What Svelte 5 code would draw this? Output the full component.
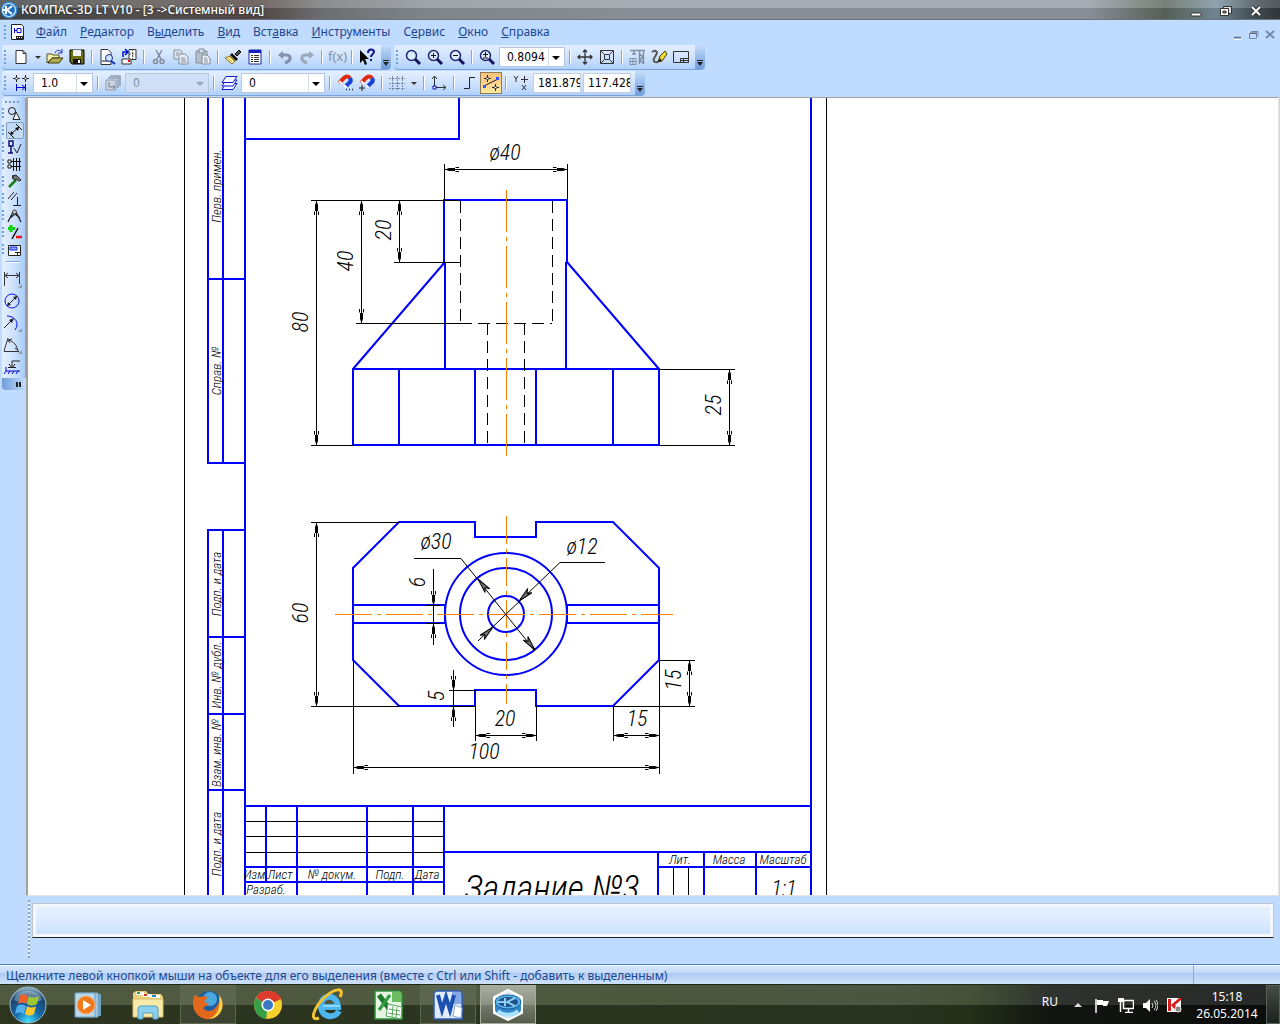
<script>
  const menu = [
    ['', 'Ф', 'айл'],
    ['', 'Р', 'едактор'],
    ['В', 'ы', 'делить'],
    ['', 'В', 'ид'],
    ['Вст', 'а', 'вка'],
    ['', 'И', 'нструменты'],
    ['С', 'е', 'рвис'],
    ['', 'О', 'кно'],
    ['', 'С', 'правка']
  ];

  const lens = '<path d="M10 10l5 5" stroke="#151560" stroke-width="3"/><circle cx="6.500" cy="6.500" r="5" fill="#dcecff" stroke="#22226a" stroke-width="1.500"/>';
  const magnet = '<path d="M2 8L7 3q3-3 6 0" fill="none" stroke="#e02a10" stroke-width="4"/><path d="M13 3q2 3-1 5l-4 4" fill="none" stroke="#1644d8" stroke-width="4"/><path d="M2 6l3 3M7 10l3 3" stroke="#fff" stroke-width="2"/>';

  const icons = {
    create: '<path d="M3 1.500h7l3 3v10H3z" fill="#fff" stroke="#333"/><path d="M10 1.500v3h3" fill="none" stroke="#333"/>',
    open: '<path d="M0 14V5h5l1 1h6v3H5z" fill="#f4efb0" stroke="#55501a"/><path d="M1 14l4-5h11l-4 5z" fill="#b5ad55" stroke="#3c3800"/><path d="M8 4c2-4 4-3 7-1m0-3v4h-4" fill="none" stroke="#1a2fd0"/>',
    save: '<path d="M1 1h14v14H3l-2-2z" fill="#6d7010" stroke="#000"/><path d="M4 1h8v6H4z" fill="#f0f0f0"/><path d="M4 10h8v5H4z" fill="#111"/><path d="M9 11h2v3H9z" fill="#fff"/>',
    preview: '<path d="M2 .500h7l3 3v12H2z" fill="#fff" stroke="#333"/><path d="M3 11h6v2H3z" fill="#888"/><circle cx="10" cy="9" r="3.500" fill="#cbe4ff" stroke="#1c2c90"/><path d="M12 12l4 3" stroke="#1030c0" stroke-width="2"/>',
    manager: '<path d="M8 .500h7v10H8z" fill="#fff" stroke="#333"/><path d="M11.500 0v10M8 5h7" stroke="#555" stroke-dasharray="2 1"/><path d="M1 10h9v5H1z" fill="#f7f7f7" stroke="#333"/><path d="M7 12h2" stroke="#e00" stroke-width="2"/><path d="M2 8V3h4M4 0l3 3-3 3" fill="none" stroke="#0010d0" stroke-width="1.500"/>',
    cut: '<path d="M5 1l5 9M11 1l-5 9" stroke="#808b9a" stroke-width="1.500"/><circle cx="4.500" cy="12.500" r="2" fill="none" stroke="#808b9a" stroke-width="1.500"/><circle cx="11" cy="12.500" r="2" fill="none" stroke="#808b9a" stroke-width="1.500"/>',
    copy: '<path d="M1 1h6l2 2v7H1z" fill="#dfe6ee" stroke="#8391a3"/><path d="M6 5h6l3 3v7H6z" fill="#e8edf4" stroke="#8391a3"/><path d="M3 4h3M3 6h2M8 9h4M8 11h5M8 13h5" stroke="#8391a3"/>',
    paste: '<path d="M1 2h11v12H1z" fill="#b6bfca" stroke="#7f8c9c"/><path d="M4 0h5v4H4z" fill="#d7dde5" stroke="#7f8c9c"/><path d="M7 6h5l3 3v6H7z" fill="#eef1f5" stroke="#7f8c9c"/><path d="M9 9h3M9 11h4M9 13h4" stroke="#8391a3"/>',
    brush: '<path d="M10 5l4-4 2 2-4 4z" fill="#555" stroke="#000"/><path d="M7 4l6 6-2 2-6-6z" fill="#111"/><path d="M5 7l5 5-3 3-7-6z" fill="#fff6b0" stroke="#8a6a10"/><path d="M3 9l4 4M5 8l4 4" stroke="#d8a820"/>',
    props: '<path d="M2 1h12v14H2z" fill="#fff" stroke="#1a2a9a"/><path d="M2 1h12v3H2z" fill="#1420c0"/><path d="M4 6.500h2M4 8.500h2M4 10.500h2M4 12.500h2M7 6.500h5M7 8.500h5M7 10.500h5M7 12.500h5" stroke="#333"/>',
    undo: '<path d="M6 2v8L1 6z" fill="#8391a8"/><path d="M5 6h5c5 1 4 6-2 8" fill="none" stroke="#8391a8" stroke-width="3"/>',
    redo: '<path d="M10 2v8l5-4z" fill="#9aa8bb"/><path d="M11 6H6c-5 1-4 6 2 8" fill="none" stroke="#9aa8bb" stroke-width="3"/>',
    fx: '<text x="-1" y="12" font-size="13" fill="#8592a3">f(x)</text>',
    help: '<path d="M1 1v13l3-3 2 5 2-1-2-5h4z" fill="#000"/><path d="M9 4c0-5 6-4 6-1 0 2-3 2-3 5m0 2v2" fill="none" stroke="#14148a" stroke-width="2"/>',
    zoom: lens,
    zoomIn: lens + '<path d="M4 6.500h5M6.500 4v5" stroke="#111"/>',
    zoomOut: lens + '<path d="M4 6.500h5" stroke="#111"/>',
    zoomBoth: lens + '<path d="M4 5.500h5M6.500 3v5M4 9h5" stroke="#111"/>',
    pan: '<path d="M8 1v14M1 8h14M6 3l2-2 2 2M6 13l2 2 2-2M3 6L1 8l2 2M13 6l2 2-2 2" fill="none" stroke="#333" stroke-width="1.300"/>',
    fit: '<path d="M1.500 1.500h13v13h-13zM5.500 5.500h5v5h-5zM2 2l3 3M14 2l-3 3M2 14l3-3M14 14l-3-3" fill="none" stroke="#333"/>',
    rebuild: '<path d="M1 1.500h15M5 2v3M3 5h4M10.500 2v13M14.500 2v13M11 5l3 3-3 3 3 3" fill="none" stroke="#8090a4" stroke-width="1.500"/><path d="M1 9.500h6v6H1zM4 9v6M1 12.500h6" fill="none" stroke="#8090a4"/>',
    redraw: '<path d="M1 3c4-3 6 0 4 3s-5 8 2 7" fill="none" stroke="#555" stroke-width="2"/><path d="M7 13l2-6 5-5 2 3-5 7z" fill="#f0dc30" stroke="#4a4000"/><path d="M7 13l2-4 2 3z" fill="#222"/>',
    sheet: '<path d="M.500 2.500h15v11H.500z" fill="none" stroke="#333"/><path d="M7.500 9.500h8v4h-8zM10.500 9v4M7 11.500h8" fill="none" stroke="#333"/>',
    step: '<path d="M3.500 0v7M0 3.500h7M12.500 0v7M9 3.500h7" stroke="#222"/><path d="M3.500 2l1.500 1.500L3.500 5 2 3.500zM12.500 2L14 3.500 12.500 5 11 3.500z" fill="#fff" stroke="#222"/><path d="M3.500 9v7M12.500 9v7M4 12.500h8M9 10l3 2.500-3 2.500" fill="none" stroke="#0000e0"/>',
    states: '<path d="M5 1h10v10M3 3h10v10" fill="none" stroke="#8d9bad" stroke-width="1.500"/><path d="M1 5h10v10H1z" fill="#cbd6e3" stroke="#8d9bad"/><path d="M4 7v5h6M8 10l2 2-2 2" fill="none" stroke="#6f7e91"/>',
    layers: '<path d="M5 8.500h11l-4 6H1z" fill="#f2f8ff" stroke="#1818c8"/><path d="M5 5h11l-4 6H1z" fill="#f2f8ff" stroke="#1818c8"/><path d="M5 1.500h11l-4 6H1z" fill="#f2f8ff" stroke="#1818c8"/>',
    snap: magnet + '<path d="M9 14.500h1M12 14.500h1M15 14.500h1" stroke="#222" stroke-width="1.500"/>',
    snapOne: magnet + '<path d="M3 10v6M0 13h6" stroke="#222"/>',
    grid: '<path d="M0 3.500h16M0 8.500h16M0 13.500h16M3.500 1v15M8.500 1v15M13.500 1v15" stroke="#77869a" stroke-dasharray="2 1"/>',
    axes: '<path d="M3.500 12V2M1 4l2.500-3L6 4M4 12.500h11M12 10l3 2.500-3 2.500" fill="none" stroke="#333"/><path d="M2 11h3v3H2z" fill="#fff" stroke="#0000e0"/>',
    ortho: '<path d="M3 13.500h5.500V2.500H14" fill="none" stroke="#222"/>',
    round: '<path d="M1 11L15 4" stroke="#222"/><path d="M4.500 0v7M1 3.500h7M12.500 9v7M9 12.500h7" stroke="#222"/><path d="M4.500 2L6 3.500 4.500 5 3 3.500zM12.500 11l1.500 1.500-1.500 1.500-1.500-1.500z" fill="#fff" stroke="#222"/><path d="M0 10h3v3H0zM13 2h3v3h-3z" fill="#3355ff"/>',
    coords: '<path d="M1 1l2 3 2-3M3 4v3M9 10l4 5M13 10l-4 5M11.500 1v7M8 4.500h7" stroke="#333" fill="none"/>',

    geometry: '<circle cx="5" cy="5" r="3.500" fill="none" stroke="#222"/><path d="M9 6l4 7.500H6z" fill="#eef5ff" stroke="#222"/>',
    sizes: '<path d="M3 12l9-8M1 9l6 6M9 1l6 6" stroke="#111"/><path d="M3 12l1-4 3 3zM12 4L8 5l3 3z" fill="#111"/>',
    marks: '<path d="M2 1h4v5H2z" fill="none" stroke="#10107a" stroke-width="1.500"/><path d="M4 6v7M1 13h5" stroke="#10107a" stroke-width="1.500"/><path d="M7 8l3 5 4-9" fill="none" stroke="#222"/>',
    edit: '<path d="M3 4.500h11M3 9.500h11M6.500 1v13M9.500 1v13M12.500 1v13" stroke="#111"/><path d="M1 3h3v3H1zM1 8h3v3H1z" fill="#fff" stroke="#111"/>',
    build: '<path d="M2 13l7-7" stroke="#158015" stroke-width="2.500"/><path d="M5 2l4-1 5 5-2 1-3-2-1 1-3-2 2-1z" fill="#777" stroke="#222"/>',
    params: '<path d="M1 8l6-7M4 9l6-7M10.500 6v8M6 14.500h8" stroke="#222"/>',
    measure: '<path d="M6 4L1 14M9 4l5 10M3 10l5-4 5 4" fill="none" stroke="#222" stroke-width="1.300"/><circle cx="7.500" cy="4" r="2" fill="#ccc" stroke="#444"/>',
    select: '<path d="M4 0v7M1 3.500h7" stroke="#10d010" stroke-width="3"/><path d="M11 3L5 14" stroke="#111" stroke-width="1.500"/><path d="M9 12h6" stroke="#f01010" stroke-width="2.500"/>',
    spec: '<path d="M1.500 3.500h12v10h-12z" fill="#fff" stroke="#222"/><path d="M3 5h7v3H3z" fill="#8fa0ff" stroke="#1030d0"/><path d="M8 10.500h6M10.500 10v4" stroke="#222" fill="none"/>',

    linear: '<path d="M1.500 2v14M16.500 2v12M2 5.500h14M5 3L2 5.500 5 8M13 3l3 2.500L13 8" fill="none" stroke="#333"/>',
    diameter: '<circle cx="9" cy="9" r="7" fill="none" stroke="#1010d0"/><path d="M4 14L14 4" stroke="#222"/><path d="M4 14l1-4 3 3zM14 4l-4 1 3 3z" fill="#222"/>',
    radius: '<path d="M4 2c8 0 13 7 8 14" fill="none" stroke="#1010d0"/><path d="M1 14l9-9" stroke="#222"/><path d="M11 4L6 6l3 3z" fill="#222"/>',
    angle: '<path d="M1 15.500h15M1 15L5 2M5 4c6 1 9 6 10 11M5 4l4-1M5 4l2 3M15 14l-3-2" fill="none" stroke="#333"/>',
    height: '<path d="M9 9V3h8M6 6l3 4 3-4M5 9.500h8" fill="none" stroke="#222"/><path d="M3 9v4h14M3 13l-2 3M7 13l-2 3M11 13l-2 3M15 13l-2 3" fill="none" stroke="#0000d8"/>'
  };

  const standard = ['create', 'v', 'open', 'save', '|', 'preview', 'manager', '|', 'cut', 'copy', 'paste', '|', 'brush', 'props', '|', 'undo', 'redo', '|', 'fx', '|', 'help'];
  const panels = ['geometry', 'sizes', 'marks', 'edit', 'build', 'params', 'measure', 'select', 'spec'];
  const commands = ['linear', 'diameter', 'radius', 'angle', 'height'];

  let scale = '0.8094';
  let step = '1.0';
  let layer = '0';
  let x = '181.879';
  let y = '117.428';

  // x, y of the text middle, string, rotated
  const sizes = [
    [505, 160, 'ø40'],
    [308, 322, '80', true],
    [353, 261, '40', true],
    [391, 230, '20', true],
    [721, 405, '25', true],
    [308, 613, '60', true],
    [425, 582, '6', true],
    [444, 696, '5', true],
    [681, 680, '15', true],
    [436, 549, 'ø30'],
    [582, 554, 'ø12'],
    [505, 726, '20'],
    [637, 726, '15'],
    [484, 759, '100'],
    [784, 896, '1:1']
  ];

  const stamps = [
    [221, 186, 'Перв. примен.', true],
    [221, 371, 'Справ. №', true],
    [221, 584, 'Подп. и дата', true],
    [221, 675, 'Инв. № дубл.', true],
    [221, 753, 'Взам. инв. №', true],
    [221, 844, 'Подп. и дата', true],
    [256, 879, 'Изм.'],
    [280, 879, 'Лист'],
    [332, 879, '№ докум.'],
    [390, 879, 'Подп.'],
    [427, 879, 'Дата'],
    [266, 894, 'Разраб.'],
    [680, 864, 'Лит.'],
    [729, 864, 'Масса'],
    [783, 864, 'Масштаб']
  ];

  // tip x, tip y, direction of the tail in degrees
  const arrows = [
    [445, 169.5, 0], [567, 169.5, 180],
    [316.5, 201, 90], [316.5, 445, -90],
    [361.5, 201, 90], [361.5, 323, -90],
    [399.5, 201, 90], [399.5, 262, -90],
    [729.5, 370, 90], [729.5, 445, -90],
    [316.5, 523, 90], [316.5, 706, -90],
    [433.5, 605, -90], [433.5, 624, 90],
    [453.5, 690, -90], [453.5, 707, 90],
    [689.5, 661, 90], [689.5, 706, -90],
    [476, 735.5, 0], [536, 735.5, 180],
    [614, 735.5, 0], [659, 735.5, 180],
    [354, 767.5, 0], [659, 767.5, 180]
  ];
  const slanted = [[478, 579, 51], [535, 650, 231], [519, 601, -44], [493, 627, 136]];
</script>

{#snippet icon(name, size = 16)}
  <svg class="icon" width={size} height={size} viewBox="0 0 {size} {size}" aria-hidden="true">{@html icons[name]}</svg>
{/snippet}

{#snippet tools(list)}
  {#each list as item}
    {#if item === '|'}
      <i class="sep"></i>
    {:else if item === 'v'}
      <button class="tool drop" aria-label="create list"><i class="tri"></i></button>
    {:else}
      <button class="tool" class:active={item === 'round'} aria-label={item}>{@render icon(item)}</button>
    {/if}
  {/each}
{/snippet}

<div class="window">
  <header class="title">
    <svg class="logo" width="18" height="18" viewBox="0 0 18 18" aria-hidden="true">
      <circle cx="9" cy="9" r="8.500" fill="#2e86d6" />
      <circle cx="9" cy="9" r="6.500" fill="#1b6fc2" stroke="#d8efff" stroke-width="1.200" />
      <path d="M3 9h3M6 5v8M12 5L7 9l5 4" stroke="#fff" stroke-width="2" fill="none" />
    </svg>
    <h1>КОМПАС-3D LT V10 - [3 -&gt;Системный вид]</h1>
    <div class="controls">
      <button aria-label="minimize"><svg width="12" height="12"><path d="M1 8h10v3H1z" fill="#fff" stroke="#333" /></svg></button>
      <button aria-label="restore"><svg width="12" height="12"><path d="M3.500 1.500h8v7h-8z" fill="#ddd" stroke="#333" /><path d="M.500 3.500h8v7h-8z" fill="#fff" stroke="#333" /><path d="M3 6h3v2H3z" fill="#888" stroke="#333" /></svg></button>
      <button aria-label="close"><svg width="12" height="12"><path d="M2 2l8 8M10 2l-8 8" stroke="#333" stroke-width="4" /><path d="M2 2l8 8M10 2l-8 8" stroke="#fff" stroke-width="2" /></svg></button>
    </div>
  </header>

  <nav class="menu">
    <i class="grip"></i>
    <svg class="doc" width="16" height="16" viewBox="0 0 16 16" aria-hidden="true">
      <path d="M1.500.500h10l2 2v13h-12z" fill="#fff" stroke="#222" />
      <path d="M4.500 4v5M5 6.500h2M7 4.500h4v4H7z" fill="none" stroke="#0000e0" />
      <path d="M6 12h7v3H6z" fill="#222" /><path d="M7 13.500h1M9 13.500h1M11 13.500h1" stroke="#fff" />
    </svg>
    {#each menu as [before, key, after]}
      <button>{before}<u>{key}</u>{after}</button>
    {/each}
    <div class="child">
      <button aria-label="minimize document"><svg width="10" height="10"><path d="M1 7.500h7" stroke="#5b6f8c" stroke-width="1.500" /><path d="M1 9.500h7" stroke="#fff" /></svg></button>
      <button aria-label="restore document"><svg width="10" height="10"><path d="M2 1.500h7v5M.500 3.500h7v5h-7z" stroke="#6f86ae" fill="none" /><path d="M1 3h7" stroke="#555" /></svg></button>
      <button aria-label="close document"><svg width="10" height="10"><path d="M1 1l8 7M9 1L1 8" stroke="#7086ae" stroke-width="2" /></svg></button>
    </div>
  </nav>

  <div class="row">
    <div class="bar">
      <i class="grip"></i>
      {@render tools(standard)}
      <i class="cap"></i>
    </div>
    <div class="bar">
      <i class="grip"></i>
      {@render tools(['zoom', 'zoomIn', 'zoomOut', '|', 'zoomBoth'])}
      <div class="combo scale">
        <select aria-label="Масштаб" bind:value={scale}><option>0.8094</option></select>
        <i class="tri"></i>
      </div>
      {@render tools(['|', 'pan', 'fit', '|', 'rebuild', 'redraw', 'sheet'])}
      <i class="cap"></i>
    </div>
  </div>

  <div class="row">
    <div class="bar">
      <i class="grip"></i>
      {@render tools(['step'])}
      <div class="combo step">
        <select aria-label="Шаг" bind:value={step}><option>1.0</option></select>
        <i class="tri"></i>
      </div>
      {@render tools(['|', 'states'])}
      <div class="combo off">
        <select aria-label="Вид" disabled><option>0</option></select>
        <i class="tri"></i>
      </div>
      {@render tools(['|', 'layers'])}
      <div class="combo">
        <select aria-label="Слой" bind:value={layer}><option>0</option></select>
        <i class="tri"></i>
      </div>
      {@render tools(['|', 'snap', 'snapOne', '|', 'grid', 'v', '|', 'axes', '|', 'ortho', 'round', '|', 'coords'])}
      <input class="coord" aria-label="X" bind:value={x} />
      <input class="coord" aria-label="Y" bind:value={y} />
      <i class="cap"></i>
    </div>
  </div>

  <main>
    <aside>
      <div class="side">
        <i class="grip flat"></i>
        {#each panels as name}
          <div class="panel">
            <i class="grip small"></i>
            <button class:pressed={name === 'sizes'} aria-label={name}>{@render icon(name)}</button>
          </div>
        {/each}
        <i class="line"></i>
        {#each commands as name}
          <button class="command" class:corner={name !== 'diameter' && name !== 'height'} aria-label={name}>{@render icon(name, 18)}</button>
        {/each}
        <i class="more"></i>
      </div>
    </aside>

    <div class="canvas">
      <svg width="100%" height="100%">
        <g transform="translate(-28 -98)" fill="none">
          <!-- sheet edge and frame -->
          <path class="thin" d="M184.500 90v820M826.500 90v820" />
          <path class="main" d="M245 90V910M811 90V910M245 139H460M459 90V139" />
          <path class="main" d="M208 90V463H245M223 90V463M208 279H245" />
          <path class="main" d="M208 910V530H245M223 530V910M208 637H245M208 714H245M208 790H245" />

          <!-- title block -->
          <path class="thin" d="M245 821.500H444M245 836.500H444M245 852.500H444M673.500 867V910M688.500 867V910" />
          <path class="main" d="M245 806H811M444 852H811M245 867H444M245 882H444M266 806V882M297 806V910M367 806V910M413 806V910M444 806V910M658 852V910M704 852V910M756 852V910M658 867H811" />

          <!-- front view -->
          <path class="main" d="M444 262V200H567V262M445 262V369M566 262V369M353 369H659V445H353ZM399 369V445M475 369V445M536 369V445M613 369V445" />
          <path class="main slope" d="M445 262L353 369M567 262L659 369" />
          <path class="thin dash" d="M460.500 201V323M552.500 201V323M460 323.500H552M487.500 323V445M524.500 323V445" />
          <path class="axis tall" d="M506.500 190V456" />

          <!-- top view -->
          <path class="main slope" d="M399 522H475V537H536V522H613L659 568V660L613 706H536V690H475V706H399L353 660V568Z" />
          <path class="main" d="M353 605H445V623H353M659 605H567V623H659" />
          <circle class="main round" cx="506" cy="614" r="61" />
          <circle class="main round" cx="506" cy="614" r="46" />
          <circle class="main round" cx="506" cy="614" r="18" />
          <path class="axis wide" d="M335 614.500H673" />
          <path class="axis" d="M506.500 516V704" />

          <!-- dimension lines -->
          <path class="thin" d="M444.500 164V200M567.500 164V200M445 169.500H567M311 200.500H460M311 445.500H353M316.500 200V445M356 323.500H461M361.500 200V323M394 262.500H461M399.500 200V262" />
          <path class="thin" d="M659 369.500H735M659 445.500H735M729.500 369V445M311 522.500H399M311 706.500H399M449 706.500H475M316.500 522V706M353.500 660V774M659.500 660V774M353 767.500H659" />
          <path class="thin" d="M475.500 706V741M536.500 706V741M475 735.500H536M613.500 706V741M613 735.500H659M659 660.500H695M613 706.500H695M689.500 660V706M433.500 569V645M426 605.500H440M426 623.500H440M453.500 670V727M449 690.500H475" />
          <path class="fine" d="M414 558.500H461L535 651M605 562.500H560L478 641" />

          {#each arrows as [ax, ay, angle]}
            <g transform="translate({ax} {ay}) rotate({angle})">
              <path d="M0 0L4 -1.500H10V1.500H4Z" fill="#000" />
              <path d="M10 0H14M10.500 -2H14M10.500 2H14" stroke="#000" />
            </g>
          {/each}
          {#each slanted as [ax, ay, angle]}
            <path d="M0 0L15 -3L11 0L15 3Z" fill="#777" stroke="#000" transform="translate({ax} {ay}) rotate({angle})" />
          {/each}

          {#each sizes as [tx, ty, label, turned]}
            <text class="size" transform="translate({tx} {ty}) rotate({turned ? -90 : 0})">{label}</text>
          {/each}
          {#each stamps as [tx, ty, label, turned]}
            <text class="stamp" transform="translate({tx} {ty}) rotate({turned ? -90 : 0})">{label}</text>
          {/each}
          <text class="name" x="552" y="901">Задание №3</text>
        </g>
      </svg>
    </div>
  </main>

  <section class="props">
    <i class="dots"></i>
    <div class="field"></div>
  </section>

  <footer class="status">
    <p>Щелкните левой кнопкой мыши на объекте для его выделения (вместе с Ctrl или Shift - добавить к выделенным)</p>
    <span></span>
  </footer>

  <div class="taskbar">
    <button class="start" aria-label="start">
      <svg width="38" height="38" viewBox="0 0 38 38">
        <defs>
          <radialGradient id="orb" cx=".5" cy=".95" r=".9"><stop offset="0" stop-color="#3fe0ff" /><stop offset=".4" stop-color="#1668a8" /><stop offset=".8" stop-color="#1a4570" /><stop offset="1" stop-color="#7fa6c0" /></radialGradient>
        </defs>
        <circle cx="19" cy="19" r="18" fill="url(#orb)" stroke="#9db9c4" />
        <path d="M5 14a15 15 0 0 1 28 0c-8 4-20 4-28 0z" fill="#fff" opacity=".3" />
        <path d="M11 10c3-2 5-2 8 0l-2 8c-3-2-5-2-8 0z" fill="#f0602a" />
        <path d="M20 10c3 2 6 2 10 0l-2 8c-4 2-7 2-10 0z" fill="#9cc832" />
        <path d="M8 20c3-2 6-2 9 0l-2 8c-3-2-6-2-9 0z" fill="#4fb0f0" />
        <path d="M18 20c3 2 6 2 9 0l-2 8c-3 2-6 2-9 0z" fill="#fbc92c" />
      </svg>
    </button>
    <button aria-label="media player">
      <svg width="32" height="32" viewBox="0 0 32 32">
        <path d="M8 5h21v22H8z" fill="#6ea2c4" /><path d="M6 4h20v24H6z" fill="#a5cbe2" stroke="#7ba9c8" /><path d="M3 4h20v24H3z" fill="#b9d8ea" stroke="#6b9dbe" />
        <circle cx="14" cy="16" r="9" fill="#f07a1c" stroke="#f9b27c" /><path d="M11 11l8 5-8 5z" fill="#fff" />
      </svg>
    </button>
    <button aria-label="explorer">
      <svg width="34" height="32" viewBox="0 0 34 32">
        <path d="M2 4l3-2h10l2 3h13l2 3v20H2z" fill="#e8cf7a" /><path d="M5 3h8v3H5z" fill="#fff" /><path d="M6 3h3v2H6z" fill="#2aa040" /><path d="M12 5h8v3h-8z" fill="#fff" /><path d="M13 5h3v2h-3z" fill="#d33" /><path d="M20 6h9v3h-9z" fill="#fff" /><path d="M21 6h4v2h-4z" fill="#2a80d0" />
        <path d="M2 10h30v18H2z" fill="#f7e9a8" stroke="#d8bf66" /><path d="M7 30V20q0-3 3-3h14q3 0 3 3v10h-5v-6H12v6z" fill="#8fd0ee" stroke="#4f9fc6" />
      </svg>
    </button>
    <button class="running" aria-label="firefox">
      <svg width="32" height="32" viewBox="0 0 32 32">
        <circle cx="17" cy="15" r="13" fill="#1d5f9e" /><circle cx="18" cy="10" r="7" fill="#4aa8dc" />
        <path d="M3 6c2 1 3 2 5 2 3-1 6-1 8 1-2 1-3 2-4 4 2 1 4 1 5 2-2 2-4 2-6 4 3 4 9 4 12 0 4-3 5-8 4-13 4 5 5 12 1 18-6 8-18 8-23 1C0 20 0 12 3 6z" fill="#e3681c" />
        <path d="M27 6c4 5 5 12 1 18-3 4-7 6-11 6 8-3 12-12 10-24z" fill="#fbd24a" />
      </svg>
    </button>
    <button aria-label="chrome">
      <svg width="32" height="32" viewBox="0 0 32 32">
        <circle cx="16" cy="16" r="14" fill="#f7cf2c" />
        <path d="M16 16L4 9a14 14 0 0 1 25 1z" fill="#dd3a2e" /><path d="M16 16l-2 14A14 14 0 0 1 4 9z" fill="#35a048" /><path d="M16 9h13l-2-3-11-1z" fill="#dd3a2e" />
        <circle cx="16" cy="16" r="6.500" fill="#fff" /><circle cx="16" cy="16" r="5" fill="#3b78c4" />
      </svg>
    </button>
    <button aria-label="internet explorer">
      <svg width="34" height="34" viewBox="0 0 34 34">
        <path d="M28 23c-4 8-18 7-18-5S26 5 27 19H12" fill="none" stroke="#4db6ee" stroke-width="6" />
        <path d="M12 18h17" stroke="#8fd8fa" stroke-width="2" />
        <path d="M8 30C-3 34 4 18 14 9S34-1 29 9" fill="none" stroke="#f4c430" stroke-width="3" />
      </svg>
    </button>
    <button aria-label="excel">
      <svg width="32" height="32" viewBox="0 0 32 32">
        <path d="M3 2h25l2 3v25H3z" fill="#e6f4e2" stroke="#2c9038" stroke-width="1.500" /><path d="M20 3h9v10h-9z" fill="#6cbc60" />
        <path d="M7 6l11 15" stroke="#1c7a2c" stroke-width="5" /><path d="M18 6L7 21" stroke="#2f9a3c" stroke-width="3" /><path d="M16 15l14 3-1 12-15-3z" fill="#fff" stroke="#58a85c" /><path d="M17 20l11 2M16 24l12 2M21 17l-1 11M25 18l-1 11" stroke="#58a85c" />
      </svg>
    </button>
    <button class="running" aria-label="word">
      <svg width="32" height="32" viewBox="0 0 32 32">
        <path d="M4 2h24l2 3v25H2V4z" fill="#dfeafa" stroke="#2a5cb8" stroke-width="1.500" /><path d="M20 3h9v12h-9z" fill="#86a8e4" />
        <path d="M6 6l4 15 4-13 4 13 4-15" fill="none" stroke="#1b50b0" stroke-width="4" /><path d="M23 16l7 3-1 10-8-2z" fill="#fff" stroke="#88a8d8" />
      </svg>
    </button>
    <button class="running current" aria-label="kompas">
      <svg width="34" height="32" viewBox="0 0 34 32">
        <path d="M17 1l14 7v16l-14 7-14-7V8z" fill="#dfe9f0" stroke="#fff" stroke-width="2" />
        <path d="M4 13v8c3 8 23 8 26 0v-8z" fill="#2f86c8" /><path d="M7 22c5 5 15 5 20 0" stroke="#a9e2ff" stroke-width="4" fill="none" />
        <ellipse cx="17" cy="13" rx="13" ry="7" fill="#58b4ea" stroke="#1a5d9c" /><ellipse cx="17" cy="13" rx="10" ry="5" fill="#1f4f86" />
        <path d="M7 13h7M14 9v8M24 9l-8 4 8 4" stroke="#8fd0f4" stroke-width="2" fill="none" />
      </svg>
    </button>

    <div class="tray">
      <span class="lang">RU</span>
      <svg class="expand" width="8" height="5"><path d="M0 5l4-4 4 4z" fill="#ddd" /></svg>
      <svg width="16" height="16"><path d="M2 2v14" stroke="#fff" stroke-width="1.500" /><path d="M3 3h6v1h6l-2 5H9V8H3z" fill="#fff" /></svg>
      <svg width="16" height="16"><path d="M5.500 3.500h10v8h-10zM10.500 12v3M7 15.500h8M2.500 5v10" fill="none" stroke="#fff" stroke-width="1.500" /><path d="M0 1h6v4H0z" fill="#fff" /></svg>
      <svg width="16" height="16"><path d="M1 6h3l4-4v13l-4-4H1z" fill="#fff" /><path d="M10 6q2 3 0 5M12 4q4 4 0 9M14 3q4 5 0 11" fill="none" stroke="#ddd" /></svg>
      <svg width="16" height="16"><path d="M1 1h14v14H1z" fill="#fff" /><path d="M2 2h3v12H2zM5 8l8-7h2v2L9 8l6 7h-4z" fill="#d41c1c" /><circle cx="12" cy="12" r="3" fill="#888" stroke="#eee" /></svg>
      <time>15:18<br />26.05.2014</time>
      <button class="desktop" aria-label="show desktop"></button>
    </div>
  </div>
</div>

<style>
  :global(body) {
    margin: 0;
  }
  .window {
    display: flex;
    flex-direction: column;
    height: 100vh;
    overflow: hidden;
    background: #bfdbff;
    color: #1e4791;
    font: 12px/16px 'Noto Sans', sans-serif;
  }
  button {
    display: flex;
    flex: none;
    align-items: center;
    justify-content: center;
    padding: 0;
    border: none;
    background: none;
    color: inherit;
    font: inherit;
  }
  svg {
    flex: none;
  }
  i {
    flex: none;
    display: block;
  }

  .title {
    display: flex;
    align-items: center;
    gap: 3px;
    height: 19px;
    border-bottom: 1px solid #6d737b;
    background:
      linear-gradient(rgba(255, 255, 255, 0.15) 40%, rgba(0, 0, 0, 0.1) 41%),
      linear-gradient(90deg, #45484b, #5b5856 10%, #5a4d4a 20%, #77797b 25%, #8d9398 33%, #979fa7 50%, #979fa7 85%, #5f6a60 91%, #7b93a1 95%, #48535a 98%, #353c40);
  }
  h1 {
    margin: 0;
    color: #fff;
    font: 500 12px/18px 'Noto Sans', sans-serif;
    text-shadow: 0 0 2px #222;
  }
  .controls {
    display: flex;
    gap: 18px;
    margin-left: auto;
    padding: 3px 18px 0 0;
  }

  .menu {
    display: flex;
    align-items: center;
    gap: 13px;
    height: 24px;
    padding-left: 4px;
  }
  .menu .doc {
    margin: 0 -3px 0 -9px;
  }
  .child {
    display: flex;
    gap: 6px;
    margin-left: auto;
    padding: 6px 5px 0 0;
  }

  .grip {
    width: 2px;
    height: 14px;
    background: repeating-linear-gradient(#6f9fdc 0 2px, transparent 2px 4px);
  }
  .row {
    display: flex;
    gap: 3px;
    height: 26px;
    padding-left: 2px;
  }
  .bar {
    display: flex;
    align-items: center;
    height: 24px;
    margin-top: 1px;
    padding-left: 2px;
    border-bottom: 1px solid #7aa3dc;
    border-radius: 4px;
    background: linear-gradient(#e3efff, #cfe2fd 50%, #b0d1fb);
  }
  .bar .grip {
    margin-right: 4px;
  }
  .tool {
    width: 22px;
    height: 22px;
  }
  .tool.drop {
    width: 12px;
  }
  .tool.active {
    box-sizing: border-box;
    border: 1px solid #8c7a52;
    background: linear-gradient(#fbc27a, #fdd28a 50%, #ffe9a0);
  }
  .icon {
    overflow: visible;
  }
  .sep {
    width: 1px;
    height: 14px;
    margin: 0 3px;
    border-right: 1px solid #fff;
    background: #7fa8dc;
  }
  .tri {
    width: 0;
    border: 3px solid transparent;
    border-top: 3px solid #333;
    border-bottom: none;
  }
  .cap {
    position: relative;
    width: 10px;
    height: 24px;
    margin-left: 3px;
    border-radius: 0 4px 4px 0;
    background: linear-gradient(#c4dcfb, #6f9dda);
  }
  .cap::after {
    content: '';
    position: absolute;
    right: 2px;
    bottom: 3px;
    border: 3px solid transparent;
    border-top: 4px solid #222;
    border-bottom: none;
  }
  .cap::before {
    content: '';
    position: absolute;
    right: 2px;
    bottom: 8px;
    width: 6px;
    height: 1px;
    background: #222;
  }

  .combo {
    position: relative;
    box-sizing: border-box;
    width: 84px;
    height: 20px;
    margin: 0 1px;
    border: 1px solid #b7c8de;
    background: #fff;
  }
  .combo.step {
    width: 60px;
  }
  .combo.scale {
    width: 66px;
  }
  .combo.off {
    background: #cfe0f6;
  }
  .combo select {
    width: 100%;
    height: 18px;
    padding: 0 0 0 7px;
    border: none;
    appearance: none;
    background: none;
    color: #000;
    font: 12px/18px 'DejaVu Sans Condensed', 'DejaVu Sans', sans-serif;
  }
  .combo.off select {
    color: #8090a4;
    opacity: 1;
  }
  .combo .tri {
    position: absolute;
    top: 8px;
    right: 4px;
    border-width: 4px 4px 0;
    border-top-color: #000;
    pointer-events: none;
  }
  .combo::after {
    content: '';
    position: absolute;
    top: 0;
    right: 15px;
    width: 1px;
    height: 18px;
    background: #d5dde8;
  }
  .combo.off::after {
    display: none;
  }
  .combo.off .tri {
    border-top-color: #96a5b8;
  }
  .coord {
    box-sizing: border-box;
    width: 48px;
    height: 20px;
    margin: 0 1px;
    padding: 0 0 0 4px;
    border: 1px solid #c3cede;
    color: #000;
    font: 12px/18px 'DejaVu Sans Condensed', 'DejaVu Sans', sans-serif;
  }

  main {
    display: flex;
    flex: 1;
    min-height: 0;
  }
  aside {
    flex: none;
    width: 26px;
    padding-top: 1px;
  }
  .side {
    display: flex;
    flex-direction: column;
    width: 23px;
    margin-left: 2px;
    border-right: 1px solid #7aa3dc;
    border-radius: 4px;
    background: linear-gradient(90deg, #e3efff, #cfe2fd 50%, #a8ccfa);
  }
  .flat {
    width: 14px;
    height: 2px;
    margin: 4px 0 2px 3px;
    background: repeating-linear-gradient(90deg, #6f9fdc 0 2px, transparent 2px 4px);
  }
  .panel {
    display: flex;
    align-items: center;
    height: 17px;
  }
  .small {
    height: 12px;
    margin-right: 2px;
  }
  .panel button {
    box-sizing: border-box;
    width: 18px;
    height: 17px;
  }
  .panel .pressed {
    border: 1px solid #7f9cc2;
    border-radius: 2px;
    background: #c4d9f2;
  }
  .line {
    width: 14px;
    height: 1px;
    margin: 3px 0 5px 4px;
    border-bottom: 1px solid #fff;
    background: #7fa8dc;
  }
  .command {
    position: relative;
    width: 20px;
    height: 22px;
  }
  .corner::after {
    content: '';
    position: absolute;
    right: 0;
    bottom: 2px;
    border: 2px solid #999;
    border-top-color: transparent;
    border-left-color: transparent;
  }
  .more {
    height: 12px;
    margin-right: -1px;
    border-radius: 0 0 4px 4px;
    background:
      linear-gradient(#222, #222) 14px 4px / 2px 5px no-repeat,
      linear-gradient(#222, #222) 17px 4px / 2px 5px no-repeat,
      linear-gradient(90deg, #6f9dda, #c4dcfb);
  }

  .canvas {
    flex: 1;
    min-width: 0;
    margin: 1px 1px 0 0;
    border: 1px solid #e3e3e3;
    border-top-color: #a0a0a0;
    border-left: 2px solid #a0a0a0;
    background: #fff;
    overflow: hidden;
  }
  .canvas > svg {
    display: block;
  }
  .main {
    stroke: #00f;
    stroke-width: 2;
    shape-rendering: crispEdges;
  }
  .main.round,
  .main.slope {
    shape-rendering: auto;
  }
  .thin {
    stroke: #000;
    shape-rendering: crispEdges;
  }
  .fine {
    stroke: #000;
  }
  .dash {
    stroke-dasharray: 12 6;
  }
  .axis {
    stroke: #ff8000;
    stroke-dasharray: 28 5 4 5;
  }
  .axis.tall {
    stroke-dasharray: 42 5 4 5;
  }
  .axis.wide {
    stroke-dasharray: 37 5 4 5;
  }
  text.size,
  text.stamp,
  text.name {
    fill: #000;
    font: italic 300 22px 'Roboto Condensed', Roboto, sans-serif;
    text-anchor: middle;
  }
  text.stamp {
    font-size: 13px;
  }
  text.name {
    font-size: 36px;
  }

  .props {
    display: flex;
    gap: 2px;
    padding: 7px 6px 6px 28px;
  }
  .dots {
    width: 2px;
    height: 58px;
    margin-top: -3px;
    background: repeating-linear-gradient(#8fa3bf 0 2px, #e8f1ff 2px 4px);
  }
  .field {
    box-sizing: border-box;
    flex: 1;
    height: 35px;
    border: 1px solid #bfc5cc;
    border-bottom-color: #222;
    background: linear-gradient(#e3efff 30%, #c9e0ff);
    box-shadow: inset 0 0 0 3px #f4f7fb;
  }

  .status {
    display: flex;
    height: 19px;
    border-top: 1px solid #4f7fbf;
    background: linear-gradient(#fff 1px, #d6e6fb 1px, #c5dbf8 40%, #adcaf2 42%, #d0e2fa);
  }
  .status p {
    flex: 1;
    margin: 0;
    padding-left: 6px;
    line-height: 21px;
  }
  .status span {
    width: 86px;
    border-left: 1px solid #8cadd9;
  }

  .taskbar {
    display: flex;
    box-sizing: border-box;
    height: 40px;
    border-top: 1px solid #20281a;
    background:
      linear-gradient(rgba(255, 255, 255, 0.1) 50%, rgba(0, 0, 0, 0.25) 51%),
      linear-gradient(90deg, #3c472b, #3a4629 45%, #36432a 70%, #303d20 76%, #181c17 82%, #0e100f);
  }
  .taskbar > button {
    box-sizing: border-box;
    width: 56px;
    margin-right: 4px;
  }
  .taskbar > .running {
    border: 1px solid #5f6853;
    background: rgba(255, 255, 255, 0.08);
  }
  .taskbar > .current {
    border-color: #a7ac9e;
    background: linear-gradient(rgba(255, 255, 255, 0.5), rgba(255, 255, 255, 0.2));
  }
  .tray {
    display: flex;
    align-items: center;
    gap: 8px;
    margin-left: auto;
    color: #fff;
  }
  .lang {
    margin: -6px 8px 0 0;
  }
  .expand {
    margin-right: 4px;
  }
  time {
    width: 66px;
    margin: 0 -2px 0 4px;
    line-height: 17px;
    text-align: center;
  }
  .desktop {
    width: 14px;
    height: 39px;
    border: 1px solid #58605a;
    background: linear-gradient(#454b46, #1d211d);
  }
</style>
